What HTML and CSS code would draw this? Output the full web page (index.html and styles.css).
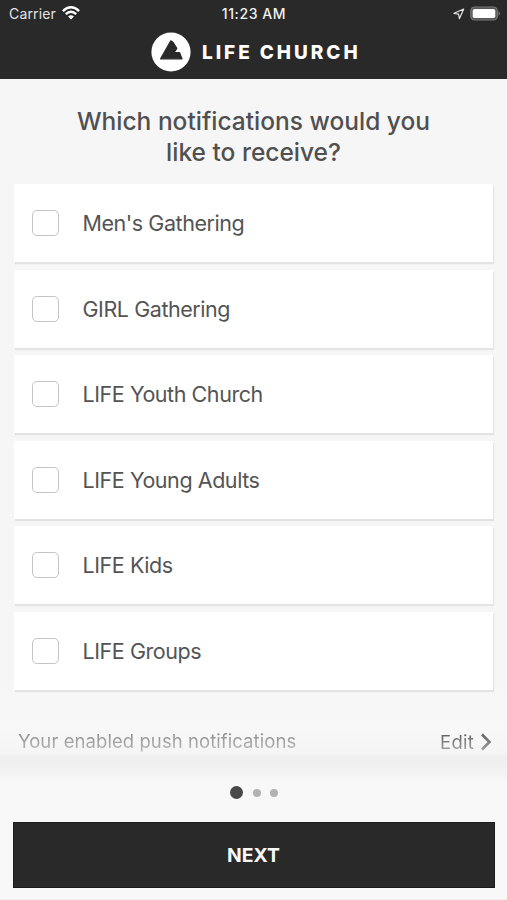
FILE: index.html
```html
<!DOCTYPE html>
<html lang="en">
<head>
<meta charset="utf-8">
<meta name="viewport" content="width=device-width, initial-scale=1">
<title>Life Church</title>
<link rel="stylesheet" href="styles.css">
</head>
<body>
<div class="screen">
  <header class="header">
    <div class="status">
      <div class="status-left"><span class="carrier">Carrier</span>
        <svg class="wifi" width="18" height="14" viewBox="0 0 18 14" fill="none" stroke="#fff" stroke-width="2.4"><path d="M.9 5.1Q9-2.5 17.1 5.1M3.8 8.2Q9 3.2 14.2 8.2"/><path d="M6.1 10.6Q9 8 11.9 10.6L9 13.5Z" fill="#fff" stroke="none"/></svg>
      </div>
      <span class="time">11:23 AM</span>
      <div class="status-right">
        <svg width="12" height="12" viewBox="0 0 12 12" fill="none" stroke="#e4e4e4" stroke-width="1.2" stroke-linejoin="round"><path d="M10.7 1 1 5.3l4.6.8.8 4.6Z"/></svg>
        <svg width="31" height="16" viewBox="0 0 31 16"><rect x=".8" y="1" width="26.5" height="13" rx="3.8" fill="#555" stroke="#777" stroke-width="1.2"/><rect x="2.7" y="2.9" width="22.6" height="9.2" rx="1.8" fill="#fff"/><path d="M28.5 5q3 2.5 0 5Z" fill="#777"/></svg>
      </div>
    </div>
    <div class="brand">
      <svg width="40" height="40" viewBox="0 0 40 40"><circle cx="20" cy="20" r="19.6" fill="#fff"/><path d="M19.8 8.8 9.6 26.8h21.4l-2.4-6.2h-5.6l2.8-4.2-3.6-5.8Z" fill="#292929" stroke="#292929" stroke-width="1.2" stroke-linejoin="round"/></svg>
      <span class="brand-name">LIFE CHURCH</span>
    </div>
  </header>
  <main class="content">
    <h1 class="title">Which notifications would you<br>like to receive?</h1>
    <div class="list">
      <label class="option"><span class="box"></span><span>Men's Gathering</span></label>
      <label class="option"><span class="box"></span><span>GIRL Gathering</span></label>
      <label class="option"><span class="box"></span><span>LIFE Youth Church</span></label>
      <label class="option"><span class="box"></span><span>LIFE Young Adults</span></label>
      <label class="option"><span class="box"></span><span>LIFE Kids</span></label>
      <label class="option"><span class="box"></span><span>LIFE Groups</span></label>
    </div>
    <div class="enabled">
      <span class="enabled-text">Your enabled push notifications</span>
      <span class="edit"><span>Edit</span><svg width="12" height="18" viewBox="0 0 12 18" fill="none" stroke="url(#fade)" stroke-width="2.6"><defs><linearGradient id="fade" gradientUnits="userSpaceOnUse" x1="0" y1="0" x2="0" y2="18"><stop stop-color="#606060"/><stop offset="1" stop-color="#a0a0a0"/></linearGradient></defs><path d="m2 1.5 7.5 7.5L2 16.5"/></svg></span>
    </div>
  </main>
  <footer class="footer">
    <div class="dots"><i class="dot active"></i><i class="dot"></i><i class="dot"></i></div>
    <button class="next">NEXT</button>
  </footer>
</div>
</body>
</html>
```
FILE: styles.css
```css
* { box-sizing: border-box; }
body { margin: 0; background: #f7f7f7; font-family: Inter, "Liberation Sans", sans-serif; color: #505050; }
.screen { height: 900px; display: flex; flex-direction: column; overflow: hidden; border-bottom: 1px solid #eee; }
.header { height: 79px; flex: none; background: #292929; color: #fff; }
.status { height: 28px; display: grid; grid-template-columns: 1fr auto 1fr; align-items: center; padding: 0 6px 0 9px; font-size: 14px; line-height: 28px; }
.status-left { display: flex; align-items: center; gap: 6px; letter-spacing: .15px; color: #e4e4e4; }
.wifi { margin-top: -3px; }
.time { font-weight: 550; font-size: 14px; letter-spacing: .6px; margin-right: 2px; color: #f0f0f0; }
.status-right { display: flex; justify-content: flex-end; align-items: center; gap: 5px; }
.status-right svg:last-child { margin-top: -1px; }
.brand { display: flex; align-items: center; height: 40px; margin: 4px 0 0 151px; gap: 11px; }
.brand-name { padding-top: 2px; font-size: 19px; font-weight: 850; letter-spacing: 2.95px; line-height: 40px; white-space: nowrap; }
.content { height: 677px; flex: none; padding: 27px 13px 0 14px; background: linear-gradient(#f6f6f6 0 600px, #f8f8f8 650px, #f5f5f5 673px, #f1f1f1 677px); }
.title { margin: 0; padding-right: 1px; text-align: center; font-size: 24.5px; line-height: 31px; font-weight: 550; color: #505050; white-space: nowrap; }
.list { display: flex; flex-direction: column; gap: 7.5px; margin-top: 16px; }
.option { height: 78px; margin-right: 1px; padding-left: 18px; display: flex; align-items: center; gap: 24px; background: #fff; box-shadow: 1px 2px 1px #e3e3e3; font-size: 21.5px; letter-spacing: -.44px; color: #545454; white-space: nowrap; }
.box { width: 26.5px; height: 26px; border: 1.5px solid #c4c4c4; border-radius: 5px; }
.enabled { display: flex; justify-content: space-between; align-items: center; height: 30px; margin-top: 36px; padding: 0 2px 0 4px; font-size: 18.5px; white-space: nowrap; }
.enabled-text { letter-spacing: .07px; color: transparent; background: linear-gradient(#858585, #bbb); background-clip: text; }
.edit { display: flex; align-items: center; gap: 6px; padding-top: 2px; letter-spacing: .25px; }
.edit span { color: transparent; background: linear-gradient(#555, #aaa); background-clip: text; }
.footer { flex: 1; padding: 0 12px 0 13px; background: linear-gradient(#efefef 0, #f0f0f0 10px, #f8f8f8 26px); }
.dots { display: flex; align-items: center; height: 66px; padding: 7px 0 0 217px; gap: 9.5px; }
.dot { width: 8px; height: 8px; border-radius: 50%; background: #b3b3b3; }
.active { width: 13px; height: 13px; background: #484848; }
.next { display: block; width: 100%; height: 66px; border: 1px solid #1b1b1b; padding: 0 1px 1px 0; background: #292929; color: #f8f8f8; font: 650 19.3px Inter, sans-serif; }
```
